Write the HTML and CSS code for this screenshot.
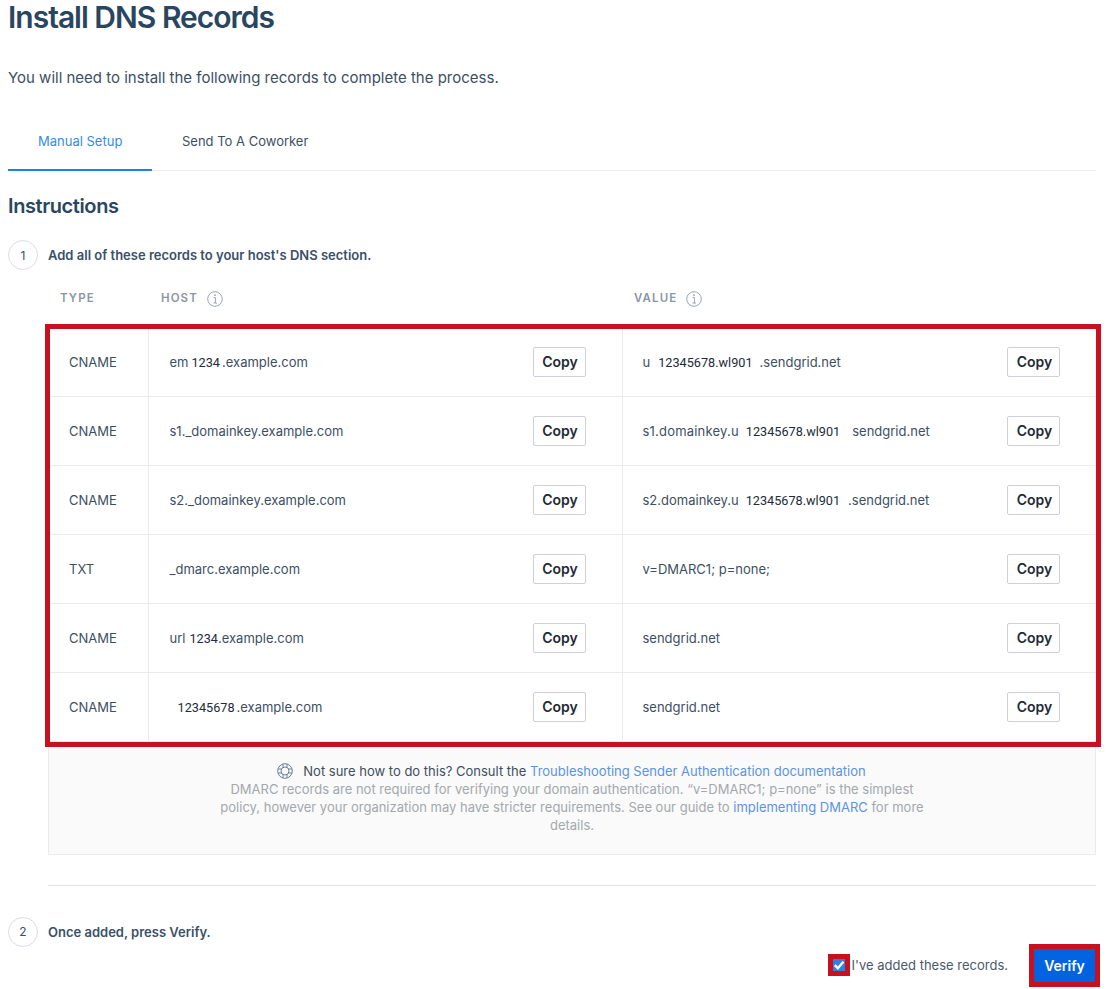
FILE: index.html
```html
<!DOCTYPE html>
<html lang="en">
<head>
<meta charset="utf-8">
<title>Install DNS Records</title>
<link rel="stylesheet" href="styles.css">
</head>
<body>
<main class="page">
  <h1 class="title">Install DNS Records</h1>
  <p class="intro">You will need to install the following records to complete the process.</p>
  <nav class="tabs">
    <a class="tab tab-active">Manual Setup</a>
    <a class="tab">Send To A Coworker</a>
  </nav>
  <h2 class="subtitle">Instructions</h2>
  <div class="step">
    <span class="step-num">1</span>
    <span class="step-text">Add all of these records to your host's DNS section.</span>
  </div>
  <div class="indent">
    <div class="heads">
      <span class="head head-type">TYPE</span>
      <span class="head head-host">HOST
        <svg class="info" viewBox="0 0 16 16"><circle cx="8" cy="8" r="7.3"/><path d="M6.6 6.6H8.4V12M6.4 12H10"/><circle class="dot" cx="8" cy="4.2" r=".9"/></svg>
      </span>
      <span class="head head-value">VALUE
        <svg class="info" viewBox="0 0 16 16"><circle cx="8" cy="8" r="7.3"/><path d="M6.6 6.6H8.4V12M6.4 12H10"/><circle class="dot" cx="8" cy="4.2" r=".9"/></svg>
      </span>
    </div>
    <div class="records">
      <table class="table">
        <tr>
          <td class="c-type">CNAME</td>
          <td class="c-host"><div class="cell"><span>em<span class="pasted gap-a">1234</span><span class="gap-b">.example.com</span></span><button class="copy">Copy</button></div></td>
          <td class="c-value"><div class="cell"><span>u<span class="pasted gap-c">12345678.wl901</span><span class="gap-d">.sendgrid.net</span></span><button class="copy">Copy</button></div></td>
        </tr>
        <tr>
          <td class="c-type">CNAME</td>
          <td class="c-host"><div class="cell"><span>s1._domainkey.example.com</span><button class="copy">Copy</button></div></td>
          <td class="c-value"><div class="cell"><span><span class="wide">s1.domainkey.u</span><span class="pasted gap-e">12345678.wl901</span><span class="gap-f">sendgrid.net</span></span><button class="copy">Copy</button></div></td>
        </tr>
        <tr>
          <td class="c-type">CNAME</td>
          <td class="c-host"><div class="cell"><span>s2._domainkey.example.com</span><button class="copy">Copy</button></div></td>
          <td class="c-value"><div class="cell"><span>s2.domainkey.u<span class="pasted gap-h">12345678.wl901</span><span class="gap-i">.sendgrid.net</span></span><button class="copy">Copy</button></div></td>
        </tr>
        <tr>
          <td class="c-type">TXT</td>
          <td class="c-host"><div class="cell"><span>_dmarc.example.com</span><button class="copy">Copy</button></div></td>
          <td class="c-value"><div class="cell"><span>v=DMARC1; p=none;</span><button class="copy">Copy</button></div></td>
        </tr>
        <tr>
          <td class="c-type">CNAME</td>
          <td class="c-host"><div class="cell"><span>url<span class="pasted gap-g">1234</span>.example.com</span><button class="copy">Copy</button></div></td>
          <td class="c-value"><div class="cell"><span>sendgrid.net</span><button class="copy">Copy</button></div></td>
        </tr>
        <tr>
          <td class="c-type">CNAME</td>
          <td class="c-host"><div class="cell"><span class="shifted"><span class="pasted">12345678</span><span class="gap-b">.example.com</span></span><button class="copy">Copy</button></div></td>
          <td class="c-value"><div class="cell"><span>sendgrid.net</span><button class="copy">Copy</button></div></td>
        </tr>
      </table>
    </div>
    <div class="note">
      <p class="note-lead">
        <svg class="buoy" viewBox="0 0 16 16"><circle cx="8" cy="8" r="7.3"/><circle cx="8" cy="8" r="4"/><path d="M6 .9V4.5M10 .9V4.5M6 11.5V15.1M10 11.5V15.1M.9 6H4.5M.9 10H4.5M11.5 6H15.1M11.5 10H15.1"/></svg>
        <span>Not sure how to do this? Consult the <a class="link">Troubleshooting Sender Authentication documentation</a></span>
      </p>
      <p class="note-body">DMARC records are not required for verifying your domain authentication. “v=DMARC1; p=none” is the simplest policy, however your organization may have stricter requirements. See our guide to <a class="link">implementing DMARC</a> for more details.</p>
    </div>
    <hr class="rule">
  </div>
  <div class="step step-two">
    <span class="step-num">2</span>
    <span class="step-text">Once added, press Verify.</span>
  </div>
  <div class="actions">
    <label class="check-label">
      <span class="check"><svg viewBox="0 0 12 12"><path d="M1.8 6.2 4.8 9.2 10.4 2.8"/></svg></span>
      <span>I've added these records.</span>
    </label>
    <button class="verify">Verify</button>
  </div>
</main>
</body>
</html>
```
FILE: styles.css
```css
* { box-sizing: border-box; }
html, body { margin: 0; padding: 0; }
body {
  background: #fff;
  color: #294661;
  font-family: Inter, "Liberation Sans", sans-serif;
  height: 989px;
  overflow: hidden;
}
.page { padding: 0 11px 0 8px; }
.title {
  margin: 0;
  font-size: 30px;
  line-height: 35px;
  font-weight: 600;
  letter-spacing: -1px;
  color: #294661;
}
.intro {
  margin: 33px 0 0;
  font-size: 15px;
  line-height: 20px;
  color: #3d4f5f;
}
.tabs {
  display: flex;
  margin-top: 20px;
  height: 63px;
  border-bottom: 1px solid #e9ecef;
}
.tab {
  display: flex;
  align-items: center;
  height: 63px;
  padding: 5px 30px 0;
  font-size: 13px;
  white-space: nowrap;
  color: #3d4f5f;
  border-bottom: 2px solid transparent;
}
.tab-active { color: #348ce6; border-bottom-color: #1a82e2; width: 144px; }
.subtitle {
  margin: 22px 0 0;
  font-size: 20px;
  line-height: 26px;
  font-weight: 600;
  letter-spacing: -0.4px;
  color: #294661;
}
.step {
  display: flex;
  align-items: center;
  gap: 10px;
  margin-top: 21px;
  height: 30px;
}
.step-num {
  width: 30px;
  height: 30px;
  border: 1px solid #d9dde6;
  border-radius: 50%;
  display: flex;
  align-items: center;
  justify-content: center;
  font-size: 12px;
  color: #3d4f5f;
}
.step-text { font-size: 13px; font-weight: 600; color: #3b5068; }
.indent { margin-left: 40px; }
.heads {
  display: flex;
  align-items: center;
  height: 58px;
  font-size: 11.5px;
  font-weight: 600;
  letter-spacing: 1.1px;
  color: #8a96a3;
}
.head { display: flex; align-items: center; gap: 9px; margin-top: -2px; }
.head-type { width: 100px; padding-left: 12px; }
.head-host { width: 474px; padding-left: 13px; }
.head-value { padding-left: 12px; }
.info { width: 16px; height: 16px; fill: none; stroke: #9aa5b1; stroke-width: 1; margin-top: 2px; }
.info .dot { fill: #9aa5b1; stroke: none; }
.records { position: relative; }
.records::after {
  content: "";
  position: absolute;
  left: -3px;
  right: -5px;
  top: -4px;
  bottom: -5px;
  border: 5px solid #c8101e;
  pointer-events: none;
}
.table {
  width: 100%;
  table-layout: fixed;
  border-collapse: collapse;
  font-size: 13px;
  color: #3d4f5f;
}
.table tr { height: 69px; border-bottom: 1px solid #e9ecef; }
.table tr:first-child { height: 68px; }
.table td { padding: 0; vertical-align: middle; }
.c-type { width: 100px; padding-left: 21px !important; border-right: 1px solid #e9ecef; }
.c-host { width: 474px; padding: 0 36px 0 21px !important; border-right: 1px solid #e9ecef; }
.c-value { padding: 0 36px 0 20px !important; }
.cell { display: flex; align-items: center; justify-content: space-between; }
.wide { letter-spacing: 0.2px; }
.pasted { font-family: Roboto, "Liberation Sans", sans-serif; font-size: 12.7px; color: #222c36; }
.gap-a { margin-left: 3px; }
.gap-b { margin-left: 2px; }
.gap-c { margin-left: 8px; }
.gap-d { margin-left: 7px; }
.gap-e { margin-left: 7px; }
.gap-f { margin-left: 12px; }
.gap-g { margin-left: 4px; }
.gap-h { margin-left: 7px; }
.gap-i { margin-left: 8px; }
.shifted { margin-left: 8px; }
.copy {
  width: 53px;
  height: 30px;
  padding: 0 0 0 2px;
  background: #fff;
  border: 1px solid #cdd0dc;
  border-radius: 2px;
  font-family: Inter, "Liberation Sans", sans-serif;
  font-size: 14px;
  font-weight: 600;
  color: #1f2a36;
}
.note {
  height: 109px;
  margin-top: 4px;
  padding-top: 16px;
  background: #fafafa;
  border: 1px solid #e9ecef;
  border-top: 0;
  text-align: center;
  font-size: 13px;
  line-height: 18px;
  color: #a3a8ad;
}
.note p { margin: 0; }
.note-lead {
  display: flex;
  justify-content: center;
  align-items: center;
  gap: 10px;
  color: #3d4f5f;
  padding-right: 1px;
}
.note-body { width: 720px; margin: 0 auto !important; }
.buoy { width: 16px; height: 16px; fill: none; stroke: #6f8296; stroke-width: 1; }
.link { color: #5b94e0; }
.rule { height: 1px; margin: 30px 0 0; border: 0; background: #dfe2e6; }
.step-two { margin-top: 31px; }
.actions {
  display: flex;
  justify-content: flex-end;
  align-items: center;
  gap: 26px;
  margin-top: 2px;
  padding-right: 1px;
}
.check-label { display: flex; align-items: center; gap: 7px; font-size: 13px; color: #4a5a6a; }
.check {
  width: 12px;
  height: 12px;
  background: #2f80e0;
  outline: 5px solid #c8101e;
  display: flex;
}
.check svg { width: 12px; height: 12px; fill: none; stroke: #fff; stroke-width: 2.4; }
.verify {
  width: 61px;
  height: 33px;
  padding: 0;
  border: 0;
  background: #0263e0;
  outline: 5px solid #c8101e;
  color: #fff;
  font-family: Inter, "Liberation Sans", sans-serif;
  font-size: 14px;
  font-weight: 600;
}
```
